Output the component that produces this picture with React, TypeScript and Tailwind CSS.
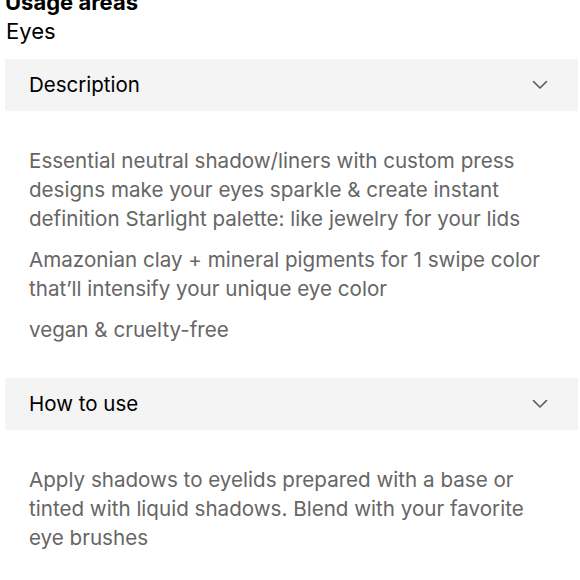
import React from 'react';

const Chevron = () => (
  <svg width="16" height="10" viewBox="0 0 16 10" fill="none" stroke="#5a5a5a" strokeWidth="1.6" strokeLinecap="round" strokeLinejoin="round">
    <path d="M1.5 1.5l6.5 6.5 6.5-6.5" />
  </svg>
);

const Section = ({ title, paras }: { title: string; paras: string[] }) => (
  <div>
    <div className="flex items-center justify-between h-[52px] bg-[#f4f4f4] pl-6 pr-[30px]">
      <span className="text-[20.5px] text-black">{title}</span>
      <Chevron />
    </div>
    <div className="px-6 pt-[35px] pb-[34px] flex flex-col gap-[12px]">
      {paras.map((p, i) => (
        <p key={i} className="text-[20.6px] leading-[29px] text-[#666]">{p}</p>
      ))}
    </div>
  </div>
);

export default function App() {
  return (
    <div className="w-[580px] h-[580px] overflow-hidden bg-white pl-[5px] pr-[2px] font-['Inter',sans-serif]">
      <div className="-mt-[12px] text-[22px] font-bold leading-[28px] text-black">Usage areas</div>
      <div className="text-[22px] leading-[30px] text-black pl-[1px] mb-[13px]">Eyes</div>
      <Section
        title="Description"
        paras={[
          'Essential neutral shadow/liners with custom press designs make your eyes sparkle & create instant definition Starlight palette: like jewelry for your lids',
          'Amazonian clay + mineral pigments for 1 swipe color that’ll intensify your unique eye color',
          'vegan & cruelty-free',
        ]}
      />
      <Section
        title="How to use"
        paras={[
          'Apply shadows to eyelids prepared with a base or tinted with liquid shadows. Blend with your favorite eye brushes',
        ]}
      />
    </div>
  );
}
